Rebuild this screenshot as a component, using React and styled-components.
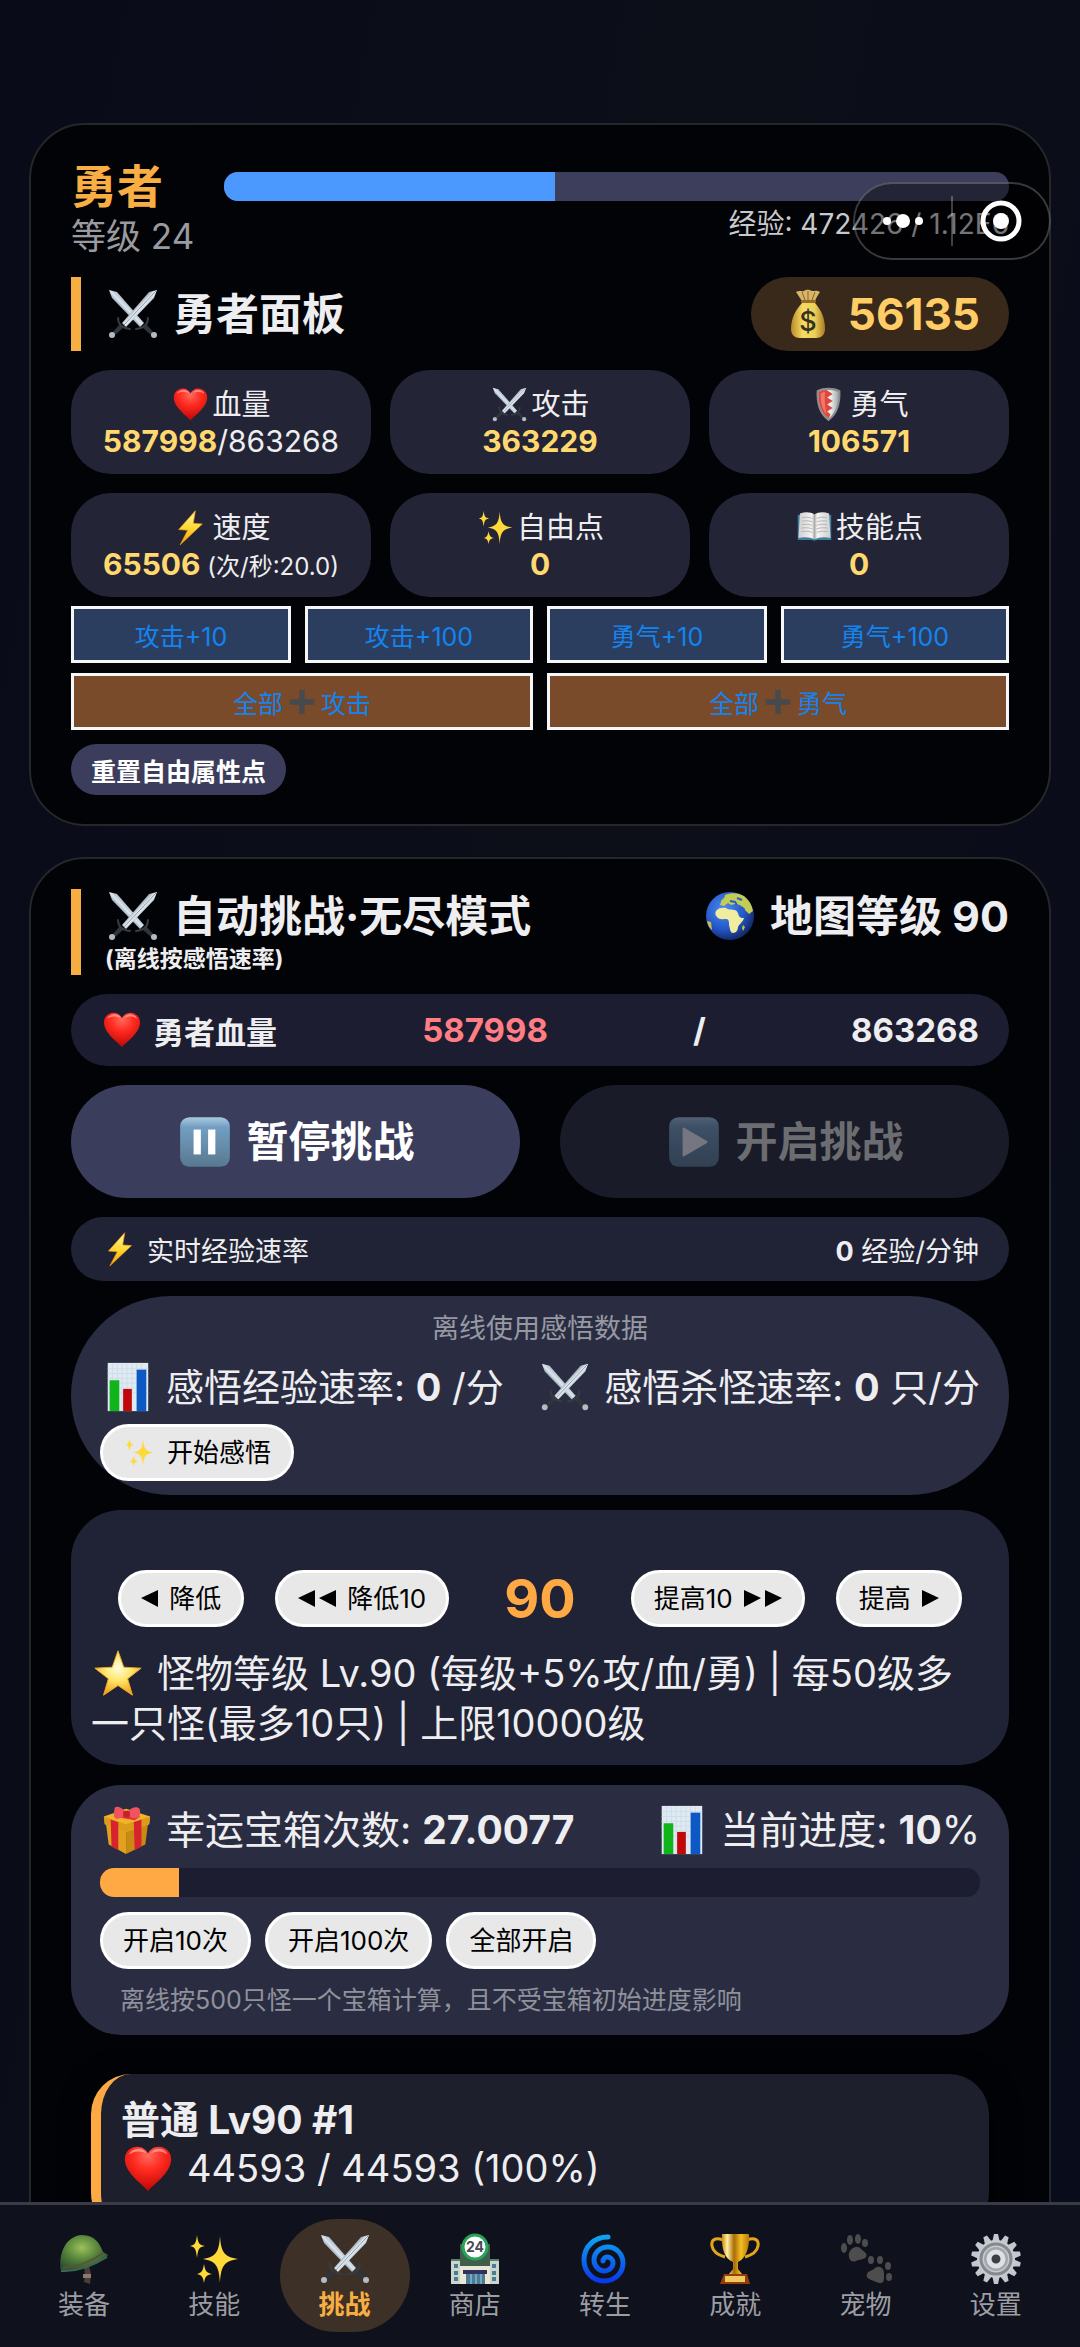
import React from "react";
import styled, { createGlobalStyle } from "styled-components";

const GlobalStyle = createGlobalStyle`
  * {
    box-sizing: border-box;
  }
  body {
    margin: 0;
    background-color: #0a0c18;
    color: #eeeef0;
    font-family: Inter, "Noto Sans CJK SC", sans-serif;
  }
  h1, h2, h3, p {
    margin: 0;
  }
  button {
    font-family: inherit;
    cursor: pointer;
  }
`;

/* ---------- icons ---------- */

const DefsSvg = styled.svg`
  position: absolute;
  width: 0;
  height: 0;
`;

const IconSvg = styled.svg`
  display: block;
  flex-shrink: 0;
  opacity: ${(props) => (props.$faded ? 0.4 : 1)};
`;

const GradientDefs = () => (
  <DefsSvg aria-hidden="true">
    <defs>
      <radialGradient id="gHeart" cx="50%" cy="20%" r="75%">
        <stop offset="0" stopColor="#ff6a5c" />
        <stop offset="0.45" stopColor="#ff2a20" />
        <stop offset="1" stopColor="#c40a08" />
      </radialGradient>
      <linearGradient id="gBladeA" x1="0" y1="1" x2="1" y2="0">
        <stop offset="0.4" stopColor="#7e8b99" />
        <stop offset="0.5" stopColor="#dbe6ef" />
        <stop offset="0.6" stopColor="#a9b7c4" />
      </linearGradient>
      <linearGradient id="gBladeB" x1="0" y1="0" x2="1" y2="1">
        <stop offset="0.4" stopColor="#8795a3" />
        <stop offset="0.5" stopColor="#f2f7fb" />
        <stop offset="0.6" stopColor="#9fb0bf" />
      </linearGradient>
      <linearGradient id="gBag" x1="0" y1="0" x2="1" y2="0">
        <stop offset="0" stopColor="#b98a2c" />
        <stop offset="0.35" stopColor="#f5dc62" />
        <stop offset="0.7" stopColor="#ecd058" />
        <stop offset="1" stopColor="#a97a26" />
      </linearGradient>
      <linearGradient id="gGold" x1="0" y1="0" x2="0" y2="1">
        <stop offset="0" stopColor="#fff3a8" />
        <stop offset="0.5" stopColor="#ffd935" />
        <stop offset="1" stopColor="#f59e0b" />
      </linearGradient>
      <radialGradient id="gStar" cx="50%" cy="38%" r="60%">
        <stop offset="0" stopColor="#fffde0" />
        <stop offset="0.5" stopColor="#ffe66b" />
        <stop offset="1" stopColor="#f3a51c" />
      </radialGradient>
      <radialGradient id="gOcean" cx="38%" cy="35%" r="70%">
        <stop offset="0" stopColor="#4d8cf0" />
        <stop offset="0.6" stopColor="#2457c9" />
        <stop offset="1" stopColor="#12245e" />
      </radialGradient>
      <linearGradient id="gKey" x1="0" y1="0" x2="0" y2="1">
        <stop offset="0" stopColor="#a9cbe2" />
        <stop offset="0.2" stopColor="#739fc2" />
        <stop offset="1" stopColor="#587890" />
      </linearGradient>
      <radialGradient id="gHelmet" cx="45%" cy="35%" r="65%">
        <stop offset="0" stopColor="#9dc05c" />
        <stop offset="0.6" stopColor="#4d7c36" />
        <stop offset="1" stopColor="#2d5135" />
      </radialGradient>
      <linearGradient id="gCyclone" x1="0" y1="0" x2="0" y2="1">
        <stop offset="0" stopColor="#0ea3ef" />
        <stop offset="1" stopColor="#0a39ea" />
      </linearGradient>
      <linearGradient id="gCup" x1="0" y1="0" x2="1" y2="0">
        <stop offset="0" stopColor="#c98a08" />
        <stop offset="0.2" stopColor="#fff0a0" />
        <stop offset="0.45" stopColor="#a86c05" />
        <stop offset="0.7" stopColor="#f4bf22" />
        <stop offset="1" stopColor="#b87a08" />
      </linearGradient>
      <linearGradient id="gShield" x1="0" y1="0" x2="1" y2="0">
        <stop offset="0" stopColor="#b9bcbd" />
        <stop offset="0.6" stopColor="#f0f0f0" />
        <stop offset="1" stopColor="#a3a6a8" />
      </linearGradient>
      <linearGradient id="gPage" x1="0" y1="0" x2="1" y2="0">
        <stop offset="0" stopColor="#cfd0cf" />
        <stop offset="0.42" stopColor="#f4f4f2" />
        <stop offset="0.5" stopColor="#a9aaa9" />
        <stop offset="0.58" stopColor="#f4f4f2" />
        <stop offset="1" stopColor="#cfd0cf" />
      </linearGradient>
    </defs>
  </DefsSvg>
);

const gearTeeth = Array.from({ length: 14 }, (_, i) => (i * 360) / 14);

const shapes = {
  heart: (
    <>
      <path
        d="M24 47C20 41 0 29 0 14 0 6 6 1 13 1c5 0 9 3 11 7 2-4 6-7 11-7 7 0 13 5 13 13 0 15-20 27-24 33z"
        fill="url(#gHeart)"
      />
      <path d="M4 9c2-4 6-6 10-6s7 2 8 5c-5-3-12-3-18 1z" fill="#ffb0a8" opacity="0.7" />
      <path d="M27 8c2-3 4-5 8-5 4 0 8 2 9 6-5-4-12-4-17-1z" fill="#ffb0a8" opacity="0.7" />
    </>
  ),
  swords: (
    <>
      <path d="M2 44l9-10 4 3-10 9z" fill="#30353b" />
      <path d="M46 44l-9-10-4 3 10 9z" fill="#30353b" />
      <path d="M0 0l8 2 27 31-4 4L3 8z" fill="url(#gBladeA)" />
      <path d="M48 0l-8 2-27 31 4 4L45 8z" fill="url(#gBladeB)" />
      <path d="M47 1L15 35" stroke="#8494a4" strokeWidth="1" />
      <path d="M9 28c0 6 4 10 12 11" fill="none" stroke="#373c42" strokeWidth="2" strokeLinecap="round" />
      <path d="M39 28c0 6-4 10-12 11" fill="none" stroke="#373c42" strokeWidth="2" strokeLinecap="round" />
      <circle cx="3" cy="45" r="3" fill="#b5bbc2" />
      <circle cx="45" cy="45" r="3" fill="#b5bbc2" />
    </>
  ),
  bag: (
    <>
      <path
        d="M19 12h11c7 7 11 16 11 27 0 6-4 9-9 9H16c-5 0-9-3-9-9 0-11 5-20 12-27z"
        fill="url(#gBag)"
      />
      <path d="M12 2c4-2 6 0 8-1 3-2 5-1 8 0 3 0 5-1 8 1-2 3-4 6-5 9H18c-2-3-4-6-6-9z" fill="#d7b56a" />
      <path d="M18 2l3 8M24 1v9M31 2l-3 8" stroke="#8a6420" strokeWidth="1" />
      <rect x="17" y="10" width="15" height="3" rx="1" fill="#96692a" />
      <text x="24" y="41" textAnchor="middle" fontSize="27" fontWeight="500" fill="#35321f">
        $
      </text>
    </>
  ),
  shield: (
    <>
      <path d="M24 0c6 0 12 1 17 4 1 18-3 34-17 44C10 38 6 22 7 4c5-3 11-4 17-4z" fill="#8b8f91" />
      <path d="M24 3c5 0 10 1 14 3 1 16-3 29-14 38C13 35 9 22 10 6c4-2 9-3 14-3z" fill="url(#gShield)" />
      <path
        d="M10 6c4-2 7-3 11-3l9 6-8 5 8 5-8 5 8 5-8 5 5 4-3 6C13 35 9 22 10 6z"
        fill="#e0473a"
      />
      <path d="M13 8c2-1 4-2 6-2-1 10 0 22 2 32-6-7-9-17-8-30z" fill="#f59a8c" opacity="0.6" />
    </>
  ),
  bolt: <path d="M31 0L7 27l13 1L9 49l32-30-13-1z" fill="url(#gGold)" stroke="#ef9d0c" strokeWidth="1" />,
  sparkles: (
    <g fill="#ffd83a">
      <path d="M30 1c1 16 4 21 18 23-14 2-17 7-18 24-1-17-4-22-17-24 13-2 16-7 17-23z" />
      <path d="M7 0c1 8 2 10 8 11-6 1-7 3-8 12-1-9-2-11-7-12 5-1 6-3 7-11z" />
      <path d="M14 29c1 6 2 9 8 10-6 1-7 3-8 9-1-6-2-8-7-9 5-1 6-4 7-10z" />
    </g>
  ),
  book: (
    <>
      <path d="M0 6l48 0v36H0z" fill="#3f7ea0" />
      <path d="M3 4c8-3 16-2 21 1 5-3 13-4 21-1l2 35c-9-2-17-1-23 2-6-3-14-4-23-2z" fill="url(#gPage)" />
      <path
        d="M6 10c5-1 10-1 15 1M6 15c5-1 10-1 15 1M6 20c5-1 10-1 15 1M5 25c5-1 11-1 16 1M5 30c5-1 11-1 16 1M27 11c5-2 10-2 15-1M27 16c5-2 10-2 15-1M27 21c5-2 10-2 15-1M27 26c5-2 11-2 16-1M27 31c5-2 11-2 16-1"
        fill="none"
        stroke="#9fa2a5"
        strokeWidth="1"
      />
      <path d="M20 42h8l-4 2z" fill="#1d5876" />
    </>
  ),
  plus: <path d="M19 1h10v18h18v10H29v18H19V29H1V19h18z" fill="#474a4d" />,
  globe: (
    <>
      <circle cx="24" cy="24" r="24" fill="url(#gOcean)" />
      <path
        d="M10 19c2-3 6-4 10-3 2 2 5 1 8 2 3 0 4 3 5 6 1 2 3 2 5 2-1 4-5 6-6 9 0 3-2 6-5 6-3 0-3-5-4-8 0-3 0-5-2-6-4 0-8 1-10-2-2-2-2-4-1-6z"
        fill="#f0ecA0"
      />
      <path
        d="M15 10c0-3 4-3 4-7 7-3 14-2 19 1 5 4 8 9 9 15l-4 3-4-4c0-3-3-3-5-5l-5-1-4 1-3-2-4 3-4-1z"
        fill="#c3cc55"
      />
      <path d="M1 29l4 1 1 8c-3-2-4-5-5-9z" fill="#cdbd4a" />
      <path d="M24 9l5 1 2 3M31 6l5 2M33 16l4 6" fill="none" stroke="#2c5fc4" strokeWidth="2" />
      <path d="M37 33l2 2-2 4-1-3z" fill="#cdbd4a" />
    </>
  ),
  pause: (
    <>
      <rect width="48" height="48" rx="9" fill="url(#gKey)" />
      <rect x="13" y="12" width="7" height="24" fill="#fff" />
      <rect x="27" y="12" width="7" height="24" fill="#fff" />
    </>
  ),
  play: (
    <>
      <rect width="48" height="48" rx="9" fill="url(#gKey)" />
      <path d="M14 11l22 13-22 13z" fill="#fff" stroke="#fff" strokeWidth="2" strokeLinejoin="round" />
    </>
  ),
  chart: (
    <>
      <rect x="4" y="-1" width="42" height="50" fill="#dfeaf2" />
      <path
        d="M9 0v48M14 0v48M19 0v48M24 0v48M29 0v48M34 0v48M39 0v48M4 5h42M4 10h42M4 15h42M4 20h42M4 25h42M4 30h42"
        stroke="#cfdde8"
        strokeWidth="1"
      />
      <rect x="6" y="17" width="10" height="32" fill="#10b51c" />
      <rect x="20" y="26" width="9" height="23" fill="#c00808" />
      <rect x="34" y="6" width="10" height="43" fill="#0c58c4" />
    </>
  ),
  star: (
    <path
      d="M24 1l6 17 18 1-14 11 5 17-15-10L9 47l5-17L0 19l18-1z"
      fill="url(#gStar)"
      stroke="#f0a92a"
      strokeWidth="1"
      strokeLinejoin="round"
    />
  ),
  gift: (
    <>
      <path d="M2 16l21 8v25L5 39z" fill="#e0a21d" />
      <path d="M46 16L23 24v25l20-10z" fill="#c98a14" />
      <path d="M0 10L23 2l25 8-1 8-24 8L1 18z" fill="#f0b429" />
      <path d="M0 10l23 8 25-8-1 8-24 8L1 18z" fill="#dc9c1a" />
      <path d="M7 13l8 3v29l-7-4zM31 16l8-3v28l-7 4z" fill="#d8222f" />
      <path d="M10 10l6-3 22 3-6 4z" fill="#e0343f" />
      <path d="M22 5C18-1 10-2 11 3c-1 4-1 6 1 9 4 1 8-1 11-4 4 3 8 5 13 3 2-3 2-6 1-9-2-3-9-2-12 3z" fill="#f0525e" />
      <rect x="20" y="4" width="7" height="7" rx="2" fill="#c5202c" />
    </>
  ),
  helmet: (
    <>
      <path d="M24 32l5-1 2 8-1 10-6-2 1-7z" fill="#4b3d38" />
      <path d="M23 39h8v4h-8z" fill="#8a7a70" />
      <path d="M1 36C-2 18 6 1 22 0c13 0 18 9 21 17l5 3-2 3C32 32 17 37 1 36z" fill="url(#gHelmet)" />
      <path d="M3 33c14-1 29-7 40-15" fill="none" stroke="#5c5238" strokeWidth="2" />
      <path d="M1 36c15 1 30-4 46-14" fill="none" stroke="#3f6554" strokeWidth="2" />
    </>
  ),
  store: (
    <>
      <rect x="0" y="24" width="48" height="25" fill="#c9d6c9" />
      <path d="M0 24h48v2H0z" fill="#5d7f70" />
      <rect x="9" y="9" width="30" height="22" fill="#3f5f4c" />
      <rect x="9" y="31" width="30" height="18" fill="#ece7d4" />
      <g fill="#4a7c96">
        <path d="M3 29h4v4H3zM3 36h4v4H3zM3 42h4v4H3zM41 29h4v4h-4zM41 36h4v4h-4zM41 42h4v4h-4z" />
        <rect x="15" y="38" width="19" height="11" />
      </g>
      <path d="M20 38v11M25 38v11M30 38v11" stroke="#a9d0de" strokeWidth="1" />
      <rect x="12" y="35" width="24" height="4" fill="#2f3260" />
      <circle cx="24" cy="12" r="12" fill="#fff" stroke="#28a35a" strokeWidth="3" />
      <text x="24" y="17" textAnchor="middle" fontSize="14" fontWeight="700" fill="#4a4a55">
        24
      </text>
    </>
  ),
  cyclone: (
    <path
      d="M27 2C13 2 3 12 3 25c0 12 9 21 20 21 11 0 19-8 19-18 0-9-7-16-15-16-8 0-14 6-14 13 0 6 5 11 10 11 5 0 9-4 9-8 0-4-3-6-6-6-2 0-4 2-4 4"
      fill="none"
      stroke="url(#gCyclone)"
      strokeWidth="5"
      strokeLinecap="round"
    />
  ),
  trophy: (
    <>
      <path
        d="M12 5C4 2 0 5 1 11c1 6 6 9 13 11M36 5c8-3 12 0 11 6-1 6-6 9-13 11"
        fill="none"
        stroke="#e3a51b"
        strokeWidth="3"
      />
      <path d="M11-1h27c1 15-4 25-11 28v7l4 5H18l4-5v-7C14 24 10 14 11-1z" fill="url(#gCup)" />
      <path d="M13 39h23l3 10H9z" fill="#963b0c" />
      <rect x="14" y="41" width="20" height="6" fill="#f0c860" />
    </>
  ),
  paws: (
    <g fill="#4d4d4e">
      <ellipse cx="2" cy="13" rx="3" ry="5" />
      <ellipse cx="8" cy="5" rx="3" ry="5" />
      <ellipse cx="16" cy="4" rx="3" ry="5" />
      <ellipse cx="23" cy="8" rx="3" ry="4" />
      <path d="M7 18c3-7 9-8 12-4 3 3 7 4 5 8-2 3-7 2-10 4-5 2-8-2-7-8z" />
      <ellipse cx="29" cy="25" rx="3" ry="4" />
      <ellipse cx="38" cy="25" rx="3" ry="4" />
      <ellipse cx="46" cy="31" rx="3" ry="4" />
      <ellipse cx="47" cy="42" rx="3" ry="4" />
      <path d="M25 39c1-3 5-3 8-6 4-3 9 0 9 5 0 5 1 11-5 10-4-1-7-3-10-4-2-1-3-3-2-5z" />
    </g>
  ),
  gear: (
    <>
      <g fill="#c3c8cf">
        {gearTeeth.map((angle) => (
          <path key={angle} d="M22-1h4l2 9h-8z" transform={`rotate(${angle} 24 24)`} />
        ))}
      </g>
      <circle cx="24" cy="24" r="19" fill="#c6cbd1" />
      <circle cx="24" cy="24" r="15" fill="none" stroke="#85898e" strokeWidth="3" />
      <circle cx="24" cy="24" r="12" fill="#a3a7ac" />
      <circle cx="24" cy="24" r="7" fill="#3c3e42" stroke="#dde1e5" strokeWidth="5" />
    </>
  ),
};

const Icon = ({ name, size, faded }) => (
  <IconSvg width={size} height={size} viewBox="-4 -4 56 56" $faded={faded} aria-hidden="true">
    {shapes[name]}
  </IconSvg>
);

const Arrow = ({ left, double }) => (
  <IconSvg width={double ? 38 : 17} height="17" viewBox={double ? "0 0 38 17" : "0 0 17 17"} aria-hidden="true">
    <path d={left ? "M0 8L17 0v17z" : "M17 8L0 0v17z"} fill="#000" />
    {double && <path d={left ? "M21 8L38 0v17z" : "M38 8L21 0v17z"} fill="#000" />}
  </IconSvg>
);

/* ---------- page ---------- */

const Shell = styled.div`
  height: 100vh;
  display: flex;
  flex-direction: column;
  background: linear-gradient(100deg, #090b19 0%, #0c0e18 50%, #090c1a 100%);
`;

const Scroller = styled.main`
  flex: 1;
  min-height: 0;
  overflow-y: auto;
  scrollbar-width: none;
  padding: 123px 29px 0;
`;

const Card = styled.section`
  border: 2px solid #25272b;
  border-radius: 56px;
  background-color: #020307;
  padding: 30px 40px 29px;
  margin-bottom: 31px;
`;

/* mini program menu capsule floating over the page */
const Capsule = styled.div`
  position: fixed;
  top: 182px;
  right: 29px;
  z-index: 5;
  width: 198px;
  height: 78px;
  border: 2px solid rgba(255, 255, 255, 0.22);
  border-radius: 39px;
  background-color: rgba(0, 0, 0, 0.42);
  display: flex;
  align-items: center;
`;

const CapsuleButton = styled.button`
  flex: 1;
  height: 100%;
  padding: 0;
  border: none;
  background: none;
  display: flex;
  align-items: center;
  justify-content: center;
`;

const CapsuleDivider = styled.span`
  width: 2px;
  height: 50px;
  background-color: rgba(255, 255, 255, 0.25);
`;

/* ---------- hero card ---------- */

const HeroTop = styled.div`
  display: flex;
  gap: 30px;
  margin-bottom: 22px;
`;

const HeroName = styled.h1`
  font-size: 46px;
  line-height: 62px;
  color: #f8ae42;
`;

const HeroLevel = styled.div`
  font-size: 35px;
  line-height: 38px;
  color: #9b9b9f;
`;

const HeroExp = styled.div`
  flex: 1;
  padding-top: 17px;
`;

const ExpText = styled.div`
  margin-top: 8px;
  font-size: 28px;
  line-height: 30px;
  text-align: right;
  color: #c9c9cc;
`;

const Track = styled.div`
  height: 29px;
  border-radius: 14px;
  overflow: hidden;
  background-color: ${(props) => props.$color};
`;

const Fill = styled.div`
  height: 100%;
  background-color: ${(props) => props.$color};
`;

const SectionHeader = styled.header`
  display: flex;
  justify-content: space-between;
  margin-bottom: 19px;
`;

const TitleBlock = styled.div`
  display: flex;
  flex-direction: column;
  justify-content: center;
  border-left: 10px solid #f6ae42;
  padding-left: 24px;
`;

const Title = styled.h2`
  display: flex;
  align-items: center;
  gap: 12px;
  height: 54px;
  font-size: 43px;
  line-height: 54px;
`;

const Subtitle = styled.div`
  font-size: 23px;
  line-height: 32px;
  font-weight: 700;
`;

const Gold = styled.div`
  display: flex;
  align-items: center;
  gap: 12px;
  height: 74px;
  padding: 0 29px;
  border-radius: 37px;
  background-color: #39291a;
  color: #ffcc66;
  font-size: 44px;
  font-weight: 700;
`;

const StatGrid = styled.div`
  display: grid;
  grid-template-columns: repeat(3, 1fr);
  gap: 19px;
  margin-bottom: 9px;
`;

const Stat = styled.div`
  display: flex;
  flex-direction: column;
  align-items: center;
  padding: 16px 0 14px;
  border-radius: 40px;
  background-color: #232536;
  white-space: nowrap;
`;

const StatLabel = styled.div`
  display: flex;
  align-items: center;
  gap: 2px;
  height: 37px;
  font-size: 29px;
  line-height: 37px;
`;

const StatLine = styled.div`
  height: 37px;
  font-size: 30px;
  line-height: 37px;
`;

const StatValue = styled.strong`
  color: #ffd970;
`;

const StatNote = styled.small`
  font-size: 24px;
`;

const PointRow = styled.div`
  display: grid;
  grid-template-columns: ${(props) => (props.$wide ? "1fr 1fr" : "220fr 228fr 220fr 228fr")};
  gap: 14px;
  margin-bottom: ${(props) => (props.$wide ? "14px" : "10px")};
`;

const PointButton = styled.button`
  display: flex;
  align-items: center;
  justify-content: center;
  gap: 4px;
  height: 57px;
  padding: 0;
  border: 3px solid #f4f6f8;
  background-color: ${(props) => (props.$all ? "#7a4b2a" : "#2c3e5f")};
  color: #1583ee;
  font-size: 25px;
`;

const ResetButton = styled.button`
  height: 51px;
  padding: 0 20px;
  border: none;
  border-radius: 26px;
  background-color: #3c3d5c;
  color: #fff;
  font-size: 25px;
  font-weight: 700;
  display: block;
`;

/* ---------- battle card ---------- */

const Pill = styled.div`
  display: flex;
  align-items: center;
  justify-content: space-between;
  border-radius: 36px;
`;

const HpPill = styled(Pill)`
  height: 72px;
  padding: 0 30px;
  margin-bottom: 19px;
  background-color: #1c1d30;
  font-size: 33px;
  font-weight: 700;
`;

const HpLabel = styled.span`
  font-size: 31px;
`;

const RatePill = styled(Pill)`
  height: 64px;
  padding: 0 30px;
  margin-bottom: 15px;
  background-color: #202235;
  font-size: 27px;
`;

const IconText = styled.span`
  display: flex;
  align-items: center;
  gap: ${(props) => props.$gap || "10px"};
`;

const Current = styled.span`
  color: #ff7d83;
`;

const BattleButtons = styled.div`
  display: grid;
  grid-template-columns: 1fr 1fr;
  gap: 40px;
  margin-bottom: 19px;
`;

const BattleButton = styled.button`
  display: flex;
  align-items: center;
  justify-content: center;
  gap: 12px;
  height: 113px;
  padding: 0;
  border: none;
  border-radius: 57px;
  background-color: ${(props) => (props.disabled ? "#191b29" : "#3b3d5c")};
  color: ${(props) => (props.disabled ? "#6c6d70" : "#fff")};
  font-size: 42px;
  line-height: 54px;
  font-weight: 700;
`;

const Panel = styled.div`
  border-radius: 50px;
  background-color: #2a2d42;
  font-size: 39px;
`;

const OfflinePanel = styled(Panel)`
  padding: 15px 29px 14px;
  margin-bottom: 15px;
  border-radius: 100px;
`;

const Caption = styled.div`
  font-size: 27px;
  line-height: 36px;
  text-align: center;
  color: #9799a2;
`;

const DataRow = styled.div`
  display: flex;
  justify-content: space-between;
  height: 54px;
  line-height: 54px;
  white-space: nowrap;
`;

const OfflineRow = styled(DataRow)`
  margin: 13px 0 10px;
  font-size: 38px;
`;

const LightButton = styled.button`
  display: flex;
  align-items: center;
  justify-content: center;
  gap: 11px;
  height: 57px;
  padding: 0 20px;
  border: 3px solid #fff;
  border-radius: 29px;
  background-color: #e8e8e8;
  color: #000;
  font-size: 26px;
  line-height: 32px;
  white-space: nowrap;
`;

const LevelPanel = styled(Panel)`
  padding: 60px 20px 17px;
  margin-bottom: 20px;
  background-color: #202335;
`;

const LevelRow = styled.div`
  display: flex;
  align-items: center;
  justify-content: center;
  gap: 31px;
  margin-bottom: 21px;
`;

const LevelValue = styled.strong`
  padding: 0 24px;
  font-size: 54px;
  line-height: 57px;
  color: #ffa945;
`;

const LevelText = styled.p`
  padding-right: 20px;
  font-size: 38px;
  line-height: 50px;

  svg {
    display: inline-block;
    vertical-align: middle;
    margin: -12px 12px -4px 0;
  }
`;

const ChestPanel = styled(Panel)`
  padding: 18px 29px 20px;
  margin-bottom: 39px;
`;

const ChestRow = styled(DataRow)`
  margin-bottom: 11px;
`;

const ButtonRow = styled.div`
  display: flex;
  gap: 14px;
  margin: 15px 0 16px;
`;

const ChestNote = styled.div`
  padding-left: 20px;
  font-size: 25px;
  line-height: 30px;
  color: #8f919b;
`;

const Monster = styled.article`
  margin: 0 20px;
  padding: 21px 20px 40px;
  border-left: 10px solid #ffa945;
  border-radius: 40px;
  background-color: #1e1f2d;
  box-shadow: 0 8px 30px #000;
`;

const MonsterName = styled.h3`
  font-size: 39px;
  line-height: 49px;
`;

const MonsterHp = styled(IconText)`
  height: 49px;
  font-size: 38px;
  line-height: 49px;
`;

/* ---------- tab bar ---------- */

const TabBar = styled.nav`
  display: flex;
  padding: 14px 19px 15px;
  border-top: 3px solid #393b46;
  background-color: #0f111d;
`;

const Tab = styled.a`
  flex: 1;
  display: flex;
  flex-direction: column;
  align-items: center;
  padding: 12px 0 10px;
  border-radius: 57px;
  background-color: ${(props) => (props.$active ? "#3d3027" : "transparent")};
  color: ${(props) => (props.$active ? "#f8ae42" : "#9d9ea3")};
  font-size: 26px;
  line-height: 35px;
  font-weight: ${(props) => (props.$active ? 700 : 400)};
  text-decoration: none;
`;

const stats = [
  { icon: "heart", label: "血量", value: "587998", extra: "/863268" },
  { icon: "swords", label: "攻击", value: "363229" },
  { icon: "shield", label: "勇气", value: "106571" },
  { icon: "bolt", label: "速度", value: "65506", note: "(次/秒:20.0)" },
  { icon: "sparkles", label: "自由点", value: "0" },
  { icon: "book", label: "技能点", value: "0" },
];

const tabs = [
  { icon: "helmet", label: "装备" },
  { icon: "sparkles", label: "技能" },
  { icon: "swords", label: "挑战", active: true },
  { icon: "store", label: "商店" },
  { icon: "cyclone", label: "转生" },
  { icon: "trophy", label: "成就" },
  { icon: "paws", label: "宠物" },
  { icon: "gear", label: "设置" },
];

const Progress = ({ label, value, track, color }) => (
  <Track role="progressbar" aria-label={label} aria-valuenow={value} $color={track}>
    <Fill $color={color} style={{ width: `${value}%` }} />
  </Track>
);

const HeroCard = () => (
  <Card>
    <HeroTop>
      <div>
        <HeroName>勇者</HeroName>
        <HeroLevel>等级 24</HeroLevel>
      </div>
      <HeroExp>
        <Progress label="经验" value={42.2} track="#3d3e5c" color="#4b98ff" />
        <ExpText>经验: 472426 / 1.12E6</ExpText>
      </HeroExp>
    </HeroTop>
    <SectionHeader>
      <TitleBlock>
        <Title>
          <Icon name="swords" size={56} />
          勇者面板
        </Title>
      </TitleBlock>
      <Gold>
        <Icon name="bag" size={56} />
        56135
      </Gold>
    </SectionHeader>
    <StatGrid>
      {stats.map((s) => (
        <Stat key={s.label}>
          <StatLabel>
            <Icon name={s.icon} size={39} />
            {s.label}
          </StatLabel>
          <StatLine>
            <StatValue>{s.value}</StatValue>
            {s.extra}
            {s.note && <StatNote> {s.note}</StatNote>}
          </StatLine>
        </Stat>
      ))}
    </StatGrid>
    <PointRow>
      <PointButton>攻击+10</PointButton>
      <PointButton>攻击+100</PointButton>
      <PointButton>勇气+10</PointButton>
      <PointButton>勇气+100</PointButton>
    </PointRow>
    <PointRow $wide>
      <PointButton $all>
        全部
        <Icon name="plus" size={30} />
        攻击
      </PointButton>
      <PointButton $all>
        全部
        <Icon name="plus" size={30} />
        勇气
      </PointButton>
    </PointRow>
    <ResetButton>重置自由属性点</ResetButton>
  </Card>
);

const BattleCard = () => (
  <Card>
    <SectionHeader>
      <TitleBlock>
        <Title>
          <Icon name="swords" size={56} />
          自动挑战·无尽模式
        </Title>
        <Subtitle>(离线按感悟速率)</Subtitle>
      </TitleBlock>
      <Title as="div">
        <Icon name="globe" size={56} />
        <strong>地图等级 90</strong>
      </Title>
    </SectionHeader>
    <HpPill>
      <IconText>
        <Icon name="heart" size={42} />
        <HpLabel>勇者血量</HpLabel>
      </IconText>
      <Current>587998</Current>
      <span>/</span>
      <span>863268</span>
    </HpPill>
    <BattleButtons>
      <BattleButton>
        <Icon name="pause" size={58} />
        暂停挑战
      </BattleButton>
      <BattleButton disabled>
        <Icon name="play" size={58} faded />
        开启挑战
      </BattleButton>
    </BattleButtons>
    <RatePill>
      <IconText $gap="8px">
        <Icon name="bolt" size={38} />
        实时经验速率
      </IconText>
      <span>
        <strong>0</strong> 经验/分钟
      </span>
    </RatePill>
    <OfflinePanel>
      <Caption>离线使用感悟数据</Caption>
      <OfflineRow>
        <IconText $gap="12px">
          <Icon name="chart" size={54} />
          <span>
            感悟经验速率: <strong>0</strong> /分
          </span>
        </IconText>
        <IconText $gap="12px">
          <Icon name="swords" size={54} />
          <span>
            感悟杀怪速率: <strong>0</strong> 只/分
          </span>
        </IconText>
      </OfflineRow>
      <LightButton>
        <Icon name="sparkles" size={33} />
        开始感悟
      </LightButton>
    </OfflinePanel>
    <LevelPanel>
      <LevelRow>
        <LightButton>
          <Arrow left />
          降低
        </LightButton>
        <LightButton>
          <Arrow left double />
          降低10
        </LightButton>
        <LevelValue>90</LevelValue>
        <LightButton>
          提高10
          <Arrow double />
        </LightButton>
        <LightButton>
          提高
          <Arrow />
        </LightButton>
      </LevelRow>
      <LevelText>
        <Icon name="star" size={54} />
        怪物等级 Lv.90 (每级+5%攻/血/勇) | 每50级多一只怪(最多10只) | 上限10000级
      </LevelText>
    </LevelPanel>
    <ChestPanel>
      <ChestRow>
        <IconText $gap="12px">
          <Icon name="gift" size={54} />
          <span>
            幸运宝箱次数: <strong>27.0077</strong>
          </span>
        </IconText>
        <IconText $gap="12px">
          <Icon name="chart" size={54} />
          <span>
            当前进度: <strong>10</strong>%
          </span>
        </IconText>
      </ChestRow>
      <Progress label="宝箱进度" value={9} track="#1c1d30" color="#ffa945" />
      <ButtonRow>
        <LightButton>开启10次</LightButton>
        <LightButton>开启100次</LightButton>
        <LightButton>全部开启</LightButton>
      </ButtonRow>
      <ChestNote>离线按500只怪一个宝箱计算，且不受宝箱初始进度影响</ChestNote>
    </ChestPanel>
    <Monster>
      <MonsterName>普通 Lv90 #1</MonsterName>
      <MonsterHp $gap="12px">
        <Icon name="heart" size={54} />
        44593 / 44593 (100%)
      </MonsterHp>
    </Monster>
  </Card>
);

const App = () => {
  return (
    <Shell>
      <GlobalStyle />
      <GradientDefs />
      <Scroller>
        <HeroCard />
        <BattleCard />
      </Scroller>
      <Capsule>
        <CapsuleButton aria-label="更多">
          <svg width="44" height="16" viewBox="0 0 44 16" fill="#fff">
            <circle cx="6" cy="8" r="4" />
            <circle cx="22" cy="8" r="7" />
            <circle cx="38" cy="8" r="4" />
          </svg>
        </CapsuleButton>
        <CapsuleDivider />
        <CapsuleButton aria-label="关闭">
          <svg width="42" height="42" viewBox="0 0 42 42" fill="none">
            <circle cx="21" cy="21" r="18" stroke="#fff" strokeWidth="5" />
            <circle cx="21" cy="21" r="8" fill="#fff" />
          </svg>
        </CapsuleButton>
      </Capsule>
      <TabBar>
        {tabs.map((t) => (
          <Tab key={t.label} href={`#${t.icon}`} $active={t.active}>
            <Icon name={t.icon} size={56} />
            {t.label}
          </Tab>
        ))}
      </TabBar>
    </Shell>
  );
};

export default App;
